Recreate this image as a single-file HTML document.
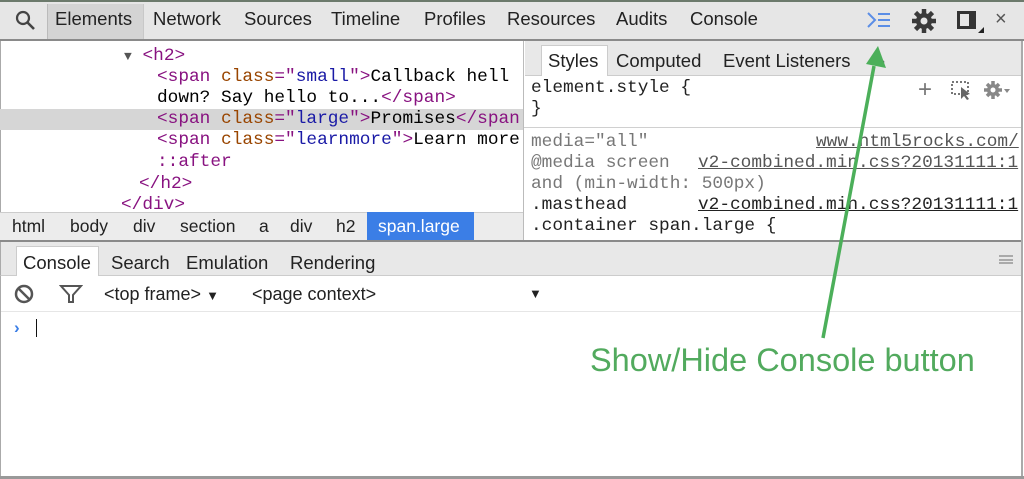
<!DOCTYPE html>
<html><head><meta charset="utf-8"><style>
*{margin:0;padding:0;box-sizing:border-box}
body{width:1024px;height:479px;position:relative;overflow:hidden;background:#fff;font-family:"Liberation Sans",sans-serif;}
.abs{position:absolute}
.top{left:0;top:0;width:1024px;height:41px;background:#e6e6e6;border-top:2px solid #6c7a6c;border-bottom:2px solid #8a8a8a}
.tab{position:absolute;top:8px;font-size:18.5px;color:#222}
.mono{font-family:"Liberation Mono",monospace;font-size:17.8px;white-space:pre;position:absolute;line-height:21px}
.tg{color:#881280}.at{color:#994500}.av{color:#1a1aa6}
.crumb{position:absolute;top:216px;font-size:17.5px;color:#222}
</style></head><body>
<div class="abs top"></div>
<div class="abs" style="left:47px;top:4px;width:97px;height:35px;background:#d4d4d4;border-left:1px solid #bbb;border-right:1px solid #c8c8c8"></div>
<svg class="abs" style="left:14px;top:9px" width="24" height="24"><circle cx="9" cy="9" r="6" fill="none" stroke="#444" stroke-width="2.2"/><line x1="13.5" y1="13.5" x2="20" y2="20" stroke="#444" stroke-width="2.6"/></svg>
<div class="tab" style="left:55px">Elements</div>
<div class="tab" style="left:153px">Network</div>
<div class="tab" style="left:244px">Sources</div>
<div class="tab" style="left:331px">Timeline</div>
<div class="tab" style="left:424px">Profiles</div>
<div class="tab" style="left:507px">Resources</div>
<div class="tab" style="left:616px">Audits</div>
<div class="tab" style="left:690px">Console</div>
<svg class="abs" style="left:866px;top:10px" width="26" height="20"><polyline points="2,3 9,10 2,17" fill="none" stroke="#5b8ee6" stroke-width="2"/><line x1="12" y1="4" x2="24" y2="4" stroke="#5b8ee6" stroke-width="2"/><line x1="12" y1="10" x2="24" y2="10" stroke="#5b8ee6" stroke-width="2"/><line x1="12" y1="16" x2="24" y2="16" stroke="#5b8ee6" stroke-width="2"/></svg>
<svg class="abs" style="left:910px;top:7px" width="28" height="28" viewBox="0 0 28 28"><g fill="#3a3a3a"><circle cx="14" cy="14" r="8"/><g stroke="#3a3a3a" stroke-width="4.5"><line x1="14" y1="2" x2="14" y2="26"/><line x1="2" y1="14" x2="26" y2="14"/><line x1="5.5" y1="5.5" x2="22.5" y2="22.5"/><line x1="22.5" y1="5.5" x2="5.5" y2="22.5"/></g></g><circle cx="14" cy="14" r="3.5" fill="#e6e6e6"/></svg>
<div class="abs" style="left:957px;top:11px;width:19px;height:18px;border:3px solid #333;border-right-width:7px"></div>
<div class="abs" style="left:978px;top:27px;width:0;height:0;border-left:6px solid transparent;border-bottom:6px solid #222"></div>
<div class="abs" style="left:995px;top:8px;font-size:20px;color:#555">×</div>
<!-- elements panel -->
<div class="abs" style="left:0;top:41px;width:523px;height:171px;background:#fff;border-left:1px solid #aaa"></div>
<div class="abs" style="left:0;top:109px;width:523px;height:21px;background:#d6d6d6"></div>
<div class="abs" style="left:0;top:41px;width:523px;height:171px;overflow:hidden">
<div class="mono" style="left:124px;top:5px"><span style="color:#555;font-size:13px">▼</span> <span class="tg">&lt;h2&gt;</span></div>
<div class="mono" style="left:157px;top:26px"><span class="tg">&lt;span</span> <span class="at">class</span><span class="tg">="</span><span class="av">small</span><span class="tg">"&gt;</span>Callback hell</div>
<div class="mono" style="left:157px;top:47px">down? Say hello to...<span class="tg">&lt;/span&gt;</span></div>
<div class="mono" style="left:157px;top:68px"><span class="tg">&lt;span</span> <span class="at">class</span><span class="tg">="</span><span class="av">large</span><span class="tg">"&gt;</span>Promises<span class="tg">&lt;/span</span></div>
<div class="mono" style="left:157px;top:89px"><span class="tg">&lt;span</span> <span class="at">class</span><span class="tg">="</span><span class="av">learnmore</span><span class="tg">"&gt;</span>Learn more</div>
<div class="mono tg" style="left:157px;top:111px">::after</div>
<div class="mono tg" style="left:139px;top:133px">&lt;/h2&gt;</div>
<div class="mono tg" style="left:121px;top:154px">&lt;/div&gt;</div>
</div>
<div class="abs" style="left:0;top:212px;width:523px;height:29px;background:#ececec;border-top:1px solid #ccc"></div>
<div class="abs" style="left:367px;top:212px;width:107px;height:29px;background:#3b7ee6"></div>
<div class="crumb" style="left:12px">html</div>
<div class="crumb" style="left:70px">body</div>
<div class="crumb" style="left:133px">div</div>
<div class="crumb" style="left:180px">section</div>
<div class="crumb" style="left:259px">a</div>
<div class="crumb" style="left:290px">div</div>
<div class="crumb" style="left:336px">h2</div>
<div class="crumb" style="left:378px;color:#fff">span.large</div>
<!-- styles pane -->
<div class="abs" style="left:523px;top:41px;width:498px;height:200px;background:#fff;border-left:1px solid #bbb;overflow:hidden">
<div class="abs" style="left:1px;top:0;width:497px;height:35px;background:#e8e8e8;border-bottom:1px solid #ccc"></div>
<div class="abs" style="left:17px;top:4px;width:67px;height:31px;background:#fff;border:1px solid #ccc;border-bottom:none"></div>
<div class="tab" style="left:24px;top:9px">Styles</div>
<div class="tab" style="left:92px;top:9px">Computed</div>
<div class="tab" style="left:199px;top:9px">Event Listeners</div>
<div class="tab" style="left:355px;top:9px;color:#555">›</div>
<div class="mono" style="left:7px;top:37px;color:#222">element.style {
}</div>
<div class="abs" style="left:0;top:86px;width:498px;height:1px;background:#d0d0d0"></div>
<div class="mono" style="left:7px;top:91px;color:#777">media="all"
@media screen
and (min-width: 500px)
<span style="color:#222">.masthead</span>
<span style="color:#222">.container span.large {</span></div>
<div class="mono" style="left:292px;top:91px;color:#555;text-decoration:underline">www.html5rocks.com/</div>
<div class="mono" style="left:174px;top:112px;color:#555;text-decoration:underline">v2-combined.min.css?20131111:1</div>
<div class="mono" style="left:174px;top:154px;color:#222;text-decoration:underline">v2-combined.min.css?20131111:1</div>
</div>
<div class="abs" style="left:918px;top:76px;font-size:24px;color:#777">+</div>
<svg class="abs" style="left:950px;top:80px" width="24" height="20"><rect x="2" y="2" width="16" height="12" fill="none" stroke="#777" stroke-width="2" stroke-dasharray="2 2"/><path d="M11 7 L11 19 L14 16 L17 20 L19 19 L16 15 L20 14 Z" fill="#666"/></svg>
<svg class="abs" style="left:983px;top:79px" width="28" height="22"><g stroke="#888" stroke-width="3.5"><line x1="10" y1="2" x2="10" y2="20"/><line x1="1" y1="11" x2="19" y2="11"/><line x1="4" y1="5" x2="16" y2="17"/><line x1="16" y1="5" x2="4" y2="17"/></g><circle cx="10" cy="11" r="6" fill="#888"/><circle cx="10" cy="11" r="2.5" fill="#fff"/><path d="M21 10 L27 10 L24 14Z" fill="#888"/></svg>
<!-- drawer -->
<div class="abs" style="left:0;top:240px;width:1022px;height:2px;background:#8a8a8a"></div>
<div class="abs" style="left:0;top:242px;width:1022px;height:34px;background:#e8e8e8;border-bottom:1px solid #ccc;border-left:1px solid #aaa"></div>
<div class="abs" style="left:16px;top:246px;width:83px;height:30px;background:#fff;border:1px solid #ccc;border-bottom:none"></div>
<div class="tab" style="left:23px;top:252px">Console</div>
<div class="tab" style="left:111px;top:252px">Search</div>
<div class="tab" style="left:186px;top:252px">Emulation</div>
<div class="tab" style="left:290px;top:252px">Rendering</div>
<div class="abs" style="left:999px;top:255px;width:14px;height:9px;border-top:2px solid #aaa;border-bottom:2px solid #aaa"></div>
<div class="abs" style="left:999px;top:259px;width:14px;height:2px;background:#aaa"></div>
<svg class="abs" style="left:13px;top:283px" width="22" height="22"><circle cx="11" cy="11" r="8" fill="none" stroke="#555" stroke-width="2.5"/><line x1="5.5" y1="5.5" x2="16.5" y2="16.5" stroke="#555" stroke-width="2.5"/></svg>
<svg class="abs" style="left:59px;top:283px" width="24" height="22"><path d="M2 3 L22 3 L14 12 L14 19 L10 19 L10 12 Z" fill="none" stroke="#555" stroke-width="2"/></svg>
<div class="abs" style="left:104px;top:284px;font-size:18px;color:#222">&lt;top frame&gt; <span style="font-size:13px">▼</span></div>
<div class="abs" style="left:252px;top:284px;font-size:18px;color:#222">&lt;page context&gt;</div>
<div class="abs" style="left:529px;top:286px;font-size:13px;color:#222">▼</div>
<div class="abs" style="left:0;top:311px;width:1022px;height:1px;background:#e6e6e6"></div>
<div class="abs" style="left:14px;top:318px;font-size:17px;color:#3b7ee6;font-weight:bold">›</div>
<div class="abs" style="left:36px;top:319px;width:1px;height:18px;background:#111"></div>
<div class="abs" style="left:0;top:276px;width:1px;height:203px;background:#aaa"></div>
<div class="abs" style="left:1021px;top:41px;width:2px;height:438px;background:#aaa"></div>
<div class="abs" style="left:0;top:476px;width:1024px;height:3px;background:#999"></div>
<!-- annotation -->
<svg class="abs" style="left:0;top:0" width="1024" height="479"><line x1="823" y1="338" x2="874" y2="66" stroke="#4caf5a" stroke-width="3.5"/><path d="M878 46 L886 68 L866 64 Z" fill="#4caf5a"/></svg>
<div class="abs" style="left:590px;top:342px;font-size:32.5px;color:#52aa5e;white-space:nowrap">Show/Hide Console button</div>
</body></html>
